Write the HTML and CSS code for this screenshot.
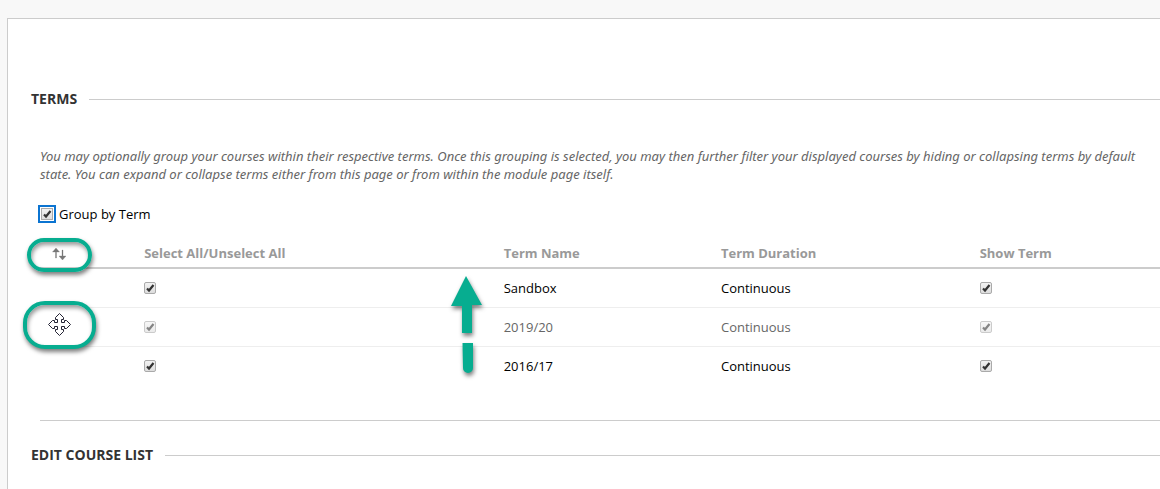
FILE: index.html
```
<!doctype html>
<html lang="en">
<head>
<meta charset="utf-8">
<meta name="viewport" content="width=device-width, initial-scale=1">
<title>Personalize: Course List</title>
<link rel="stylesheet" href="styles.css">
</head>
<body>
<main class="content">
  <section>
    <h2 class="step-title">TERMS</h2>
    <div class="step-body">
      <p class="help">You may optionally group your courses within their respective terms. Once this grouping is selected, you may then further filter your displayed courses by hiding or collapsing terms by default<br>state. You can expand or collapse terms either from this page or from within the module page itself.</p>

      <div class="group-option">
        <input class="check focused" type="checkbox" id="groupByTerm" checked>
        <label for="groupByTerm">Group by Term</label>
      </div>

      <table class="terms">
        <colgroup>
          <col class="col-order">
          <col class="col-select">
          <col class="col-name">
          <col class="col-duration">
          <col class="col-show">
        </colgroup>
        <thead>
          <tr>
            <th class="order">
              <span class="ring ring-small"></span>
              <button class="reorder" type="button" aria-label="Reorder terms">
                <svg width="14" height="14" viewBox="0 0 14 14"><path d="M4 1 7.500 5H4.500V11H3.500V5H0.500ZM10 3H11V9H14L10.500 13 7 9H10Z" fill="#777" stroke="#777" stroke-width="0.300"/></svg>
              </button>
            </th>
            <th>Select All/Unselect All</th>
            <th>Term Name</th>
            <th>Term Duration</th>
            <th>Show Term</th>
          </tr>
        </thead>
        <tbody>
          <tr>
            <td></td>
            <td class="select">
              <input class="check" type="checkbox" aria-label="Select Sandbox" checked>
              <svg class="arrow" width="40" height="106" viewBox="0 0 40 106" fill="#07ad90"><path d="M18 3 34 32 24 32V60H14V33L3 33Z"/><path d="M14.500 70H25V95A5 5 0 0 1 15 95Z"/></svg>
            </td>
            <td>Sandbox</td>
            <td>Continuous</td>
            <td><input class="check" type="checkbox" aria-label="Show Sandbox" checked></td>
          </tr>
          <tr class="dragging">
            <td class="order">
              <span class="ring ring-large">
                <svg width="23" height="23" viewBox="0 0 23 23" fill="#fff" stroke="#223"><path d="M11.500 0.500 15.500 4.500V6.500H13.500V9.500H16.500V7.500H18.500L22.500 11.500 18.500 15.500H16.500V13.500H13.500V16.500H15.500V18.500L11.500 22.500 7.500 18.500V16.500H9.500V13.500H6.500V15.500H4.500L0.500 11.500 4.500 7.500H6.500V9.500H9.500V6.500H7.500V4.500Z"/></svg>
              </span>
            </td>
            <td><input class="check" type="checkbox" aria-label="Select 2019/20" checked></td>
            <td>2019/20</td>
            <td>Continuous</td>
            <td><input class="check" type="checkbox" aria-label="Show 2019/20" checked></td>
          </tr>
          <tr>
            <td></td>
            <td><input class="check" type="checkbox" aria-label="Select 2016/17" checked></td>
            <td>2016/17</td>
            <td>Continuous</td>
            <td><input class="check" type="checkbox" aria-label="Show 2016/17" checked></td>
          </tr>
        </tbody>
      </table>
    </div>
  </section>

  <section>
    <h2 class="step-title">EDIT COURSE LIST</h2>
  </section>
</main>
</body>
</html>
```

FILE: styles.css
```
:root{--line:#ccc;--mark:#07ad90;}

*{box-sizing:border-box;}

body{
  margin:0;
  padding:18px 0 0 7px;
  background:#f8f8f8;
  color:#000;
  font:13px/18px "Open Sans",Arial,sans-serif;
  overflow:hidden;
}

.content{
  min-height:calc(100vh - 18px);
  padding:70px 0 0 23px;
  background:#fff;
  border:solid var(--line);
  border-width:1px 0 0 1px;
}

/* Section heading with a rule running to the edge */
.step-title{
  display:flex;
  align-items:center;
  gap:12px;
  margin:0;
  color:#333;
  font-size:14px;
  line-height:20px;
  font-weight:700;
}
.step-title::after{
  content:"";
  flex:1;
  height:1px;
  background:var(--line);
}

.step-body{
  margin:38px 0 24px 9px;
  padding-bottom:35px;
  border-bottom:1px solid var(--line);
}

.help{
  margin:0 0 22px;
  color:#666;
  font-family:"Noto Sans","Open Sans",sans-serif;
  font-style:italic;
  white-space:nowrap;
}

.group-option{
  display:flex;
  align-items:center;
  gap:6px;
  margin-bottom:15px;
}

/* Terms table */
.terms{
  width:100%;
  table-layout:fixed;
  border-collapse:collapse;
}
.col-order{width:9.3%;}
.col-select{width:32.1%;}
.col-name{width:19.4%;}
.col-duration{width:23.1%;}

.terms th,
.terms td{
  height:39px;
  padding:0;
  text-align:left;
  vertical-align:middle;
}
.terms th{
  height:30px;
  color:#999;
  font-weight:700;
  border-bottom:2px solid var(--line);
}
.terms td{border-bottom:1px solid #eee;}
.terms tr:last-child td{border-bottom:0;}
.dragging td{color:#666;}
.dragging .check{opacity:.6;}

.order,
.select{position:relative;}

.reorder{
  position:relative;
  display:flex;
  margin-left:12px;
  padding:2px 0 0;
  background:none;
  border:0;
}

.check{
  appearance:none;
  display:block;
  width:12px;
  height:12px;
  margin:0;
  border:1px solid #aaa;
  border-radius:2px;
  background:url("data:image/svg+xml,%3Csvg xmlns='http://www.w3.org/2000/svg' viewBox='0 0 10 10'%3E%3Cpath d='M2 5.500 4 7.500 8.500 2' fill='none' stroke='%23333' stroke-width='2.200'/%3E%3C/svg%3E") center/10px no-repeat,linear-gradient(#f2f2f2,#ddd);
}
.focused{
  margin-left:1px;
  border-radius:0;
  outline:2px solid #0b74d1;
  outline-offset:1px;
}

/* Callouts drawn over the table */
.ring{
  position:absolute;
  display:flex;
  align-items:center;
  justify-content:center;
  border:4px solid var(--mark);
  box-shadow:1px 3px 4px rgba(0,0,0,.5),inset 1px 3px 4px rgba(0,0,0,.4);
}
.ring-small{
  top:0;
  left:-13px;
  width:65px;
  height:34px;
  border-radius:17px;
}
.ring-large{
  top:-7px;
  left:-17px;
  width:73px;
  height:48px;
  border-radius:22px;
  background:#fff;
}
.arrow{
  position:absolute;
  top:4px;
  left:84.4%;
  filter:drop-shadow(1px 3px 2px rgba(0,0,0,.5));
}
```
